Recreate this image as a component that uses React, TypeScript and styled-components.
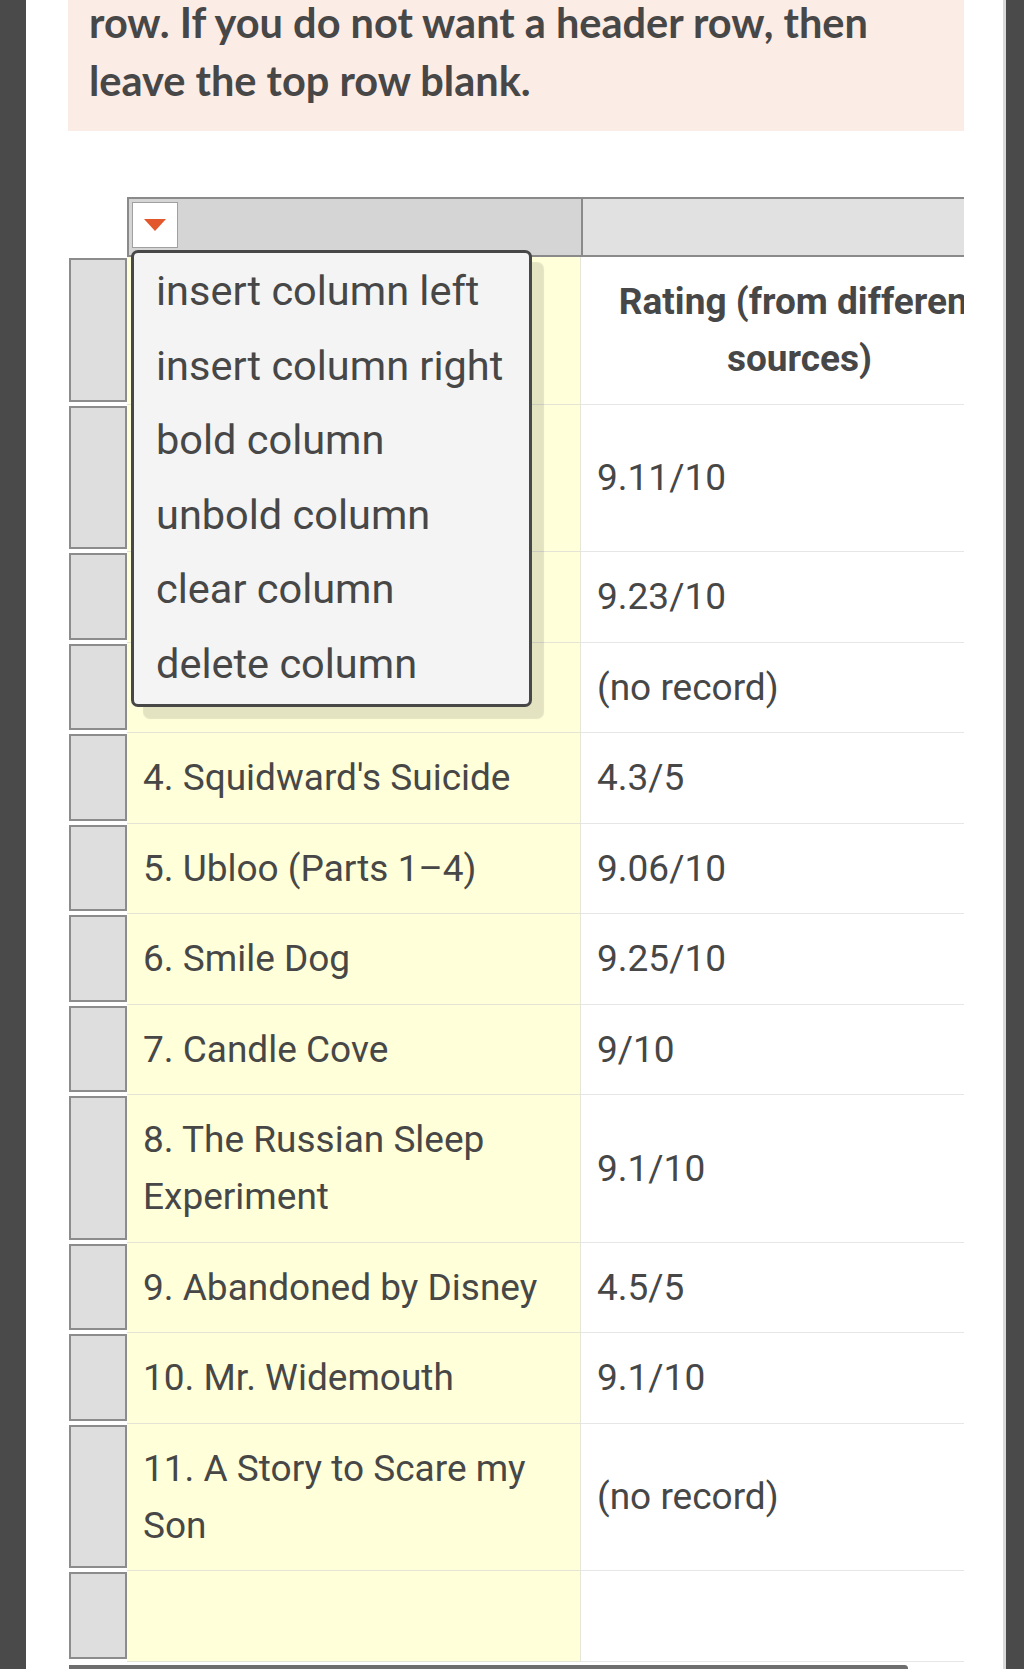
import React from 'react';
import styled, { createGlobalStyle } from 'styled-components';

const GlobalStyle = createGlobalStyle`
  html, body {
    margin: 0;
    padding: 0;
    background: #4a4a4a;
  }
  body {
    font-family: Roboto, "Liberation Sans", sans-serif;
    color: #474747;
    overflow: hidden;
  }
`;

const Page = styled.div`
  margin: 0 18px 0 26px;
  height: 1669px;
  background: #ffffff;
  border-right: 3px solid #d9d9d9;
  padding-left: 42px;
  overflow: hidden;
`;

const Note = styled.div`
  width: 875px;
  margin-top: -6px;
  padding: 0 0 22px 21px;
  background: #fcece6;
  font-family: Lato, Roboto, sans-serif;
  font-weight: 700;
  font-size: 41.5px;
  line-height: 57.5px;
  color: #474747;
`;

const TableClip = styled.div`
  position: relative;
  width: 895px;
  margin: 66px 0 0 1px;
  overflow: hidden;
`;

const Grid = styled.div`
  display: grid;
  grid-template-columns: 58px 454px 436px;
  width: 948px;
`;

const Corner = styled.div`
  background: #ffffff;
`;

interface HeadProps {
  dark?: boolean;
}

const HeadCell = styled.div<HeadProps>`
  height: 53px;
  padding: 3px 0 0 3px;
  background: ${p => (p.dark ? '#d5d5d5' : '#e1e1e1')};
  border-top: 2px solid #8a8a8a;
  border-bottom: 2px solid #8a8a8a;
  border-left: 2px solid #8a8a8a;
  box-sizing: content-box;
`;

const DropButton = styled.div`
  width: 44px;
  height: 44px;
  background: #ffffff;
  border: 1px solid #a0a0a0;
  display: flex;
  align-items: center;
  justify-content: center;
`;

const RowHead = styled.div`
  margin: 1px 0 3px 0;
  background: #dedede;
  border: 2px solid #8c8c8c;
`;

interface CellProps {
  yellow?: boolean;
  bold?: boolean;
  lines?: number;
}

const Cell = styled.div<CellProps>`
  display: flex;
  align-items: center;
  justify-content: ${p => (p.bold ? 'center' : 'flex-start')};
  text-align: ${p => (p.bold ? 'center' : 'left')};
  min-height: ${p => (p.lines || 1) * 57}px;
  padding: 16px 15px 16.5px 16px;
  background: ${p => (p.yellow ? '#ffffd9' : '#ffffff')};
  border-bottom: 1px solid ${p => (p.yellow ? '#e3e3d6' : '#e6e6e6')};
  border-right: ${p => (p.yellow ? '1px solid #e6e6da' : 'none')};
  font-size: 37px;
  font-weight: ${p => (p.bold ? 700 : 400)};
  line-height: 57px;
  color: #474747;
`;

const Menu = styled.div`
  position: absolute;
  top: 53px;
  left: 62px;
  width: 395px;
  padding: 1px 0 3px 0;
  background: #f4f4f4;
  border: 3px solid #474747;
  border-radius: 7px;
  box-shadow: 12px 12px 1px rgba(0, 0, 0, 0.11);
`;

const MenuItem = styled.div`
  height: 74.5px;
  line-height: 74.5px;
  padding-left: 22px;
  font-size: 41.5px;
  color: #474747;
  white-space: nowrap;
`;

const Scrollbar = styled.div`
  width: 839px;
  height: 7px;
  margin-top: 3px;
  background: #6e6e6e;
  border-radius: 0 4px 4px 0;
`;

const rows = [
  { title: '', rating: '9.11/10', lines: 2 },
  { title: '', rating: '9.23/10', lines: 1 },
  { title: '', rating: '(no record)', lines: 1 },
  { title: "4. Squidward's Suicide", rating: '4.3/5', lines: 1 },
  { title: '5. Ubloo (Parts 1–4)', rating: '9.06/10', lines: 1 },
  { title: '6. Smile Dog', rating: '9.25/10', lines: 1 },
  { title: '7. Candle Cove', rating: '9/10', lines: 1 },
  { title: '8. The Russian Sleep Experiment', rating: '9.1/10', lines: 2 },
  { title: '9. Abandoned by Disney', rating: '4.5/5', lines: 1 },
  { title: '10. Mr. Widemouth', rating: '9.1/10', lines: 1 },
  { title: '11. A Story to Scare my Son', rating: '(no record)', lines: 2 },
  { title: '', rating: '', lines: 1 },
];

const menuItems = [
  'insert column left',
  'insert column right',
  'bold column',
  'unbold column',
  'clear column',
  'delete column',
];

const App = () => {
  return (
    <>
      <GlobalStyle />
      <Page>
        <Note>
          row. If you do not want a header row, then
          <br />
          leave the top row blank.
        </Note>

        <TableClip>
          <Grid>
            <Corner />
            <HeadCell dark>
              <DropButton>
                <svg width="22" height="12" viewBox="0 0 22 12">
                  <polygon points="0,0 22,0 11,12" fill="#e2572b" />
                </svg>
              </DropButton>
            </HeadCell>
            <HeadCell />

            <RowHead />
            <Cell yellow bold lines={2} />
            <Cell bold lines={2}>Rating (from different sources)</Cell>

            {rows.map((r, i) => (
              <React.Fragment key={i}>
                <RowHead />
                <Cell yellow lines={r.lines}>{r.title}</Cell>
                <Cell lines={r.lines}>{r.rating}</Cell>
              </React.Fragment>
            ))}
          </Grid>
          <Scrollbar />

          <Menu>
            {menuItems.map(m => (
              <MenuItem key={m}>{m}</MenuItem>
            ))}
          </Menu>
        </TableClip>
      </Page>
    </>
  );
};

export default App;
